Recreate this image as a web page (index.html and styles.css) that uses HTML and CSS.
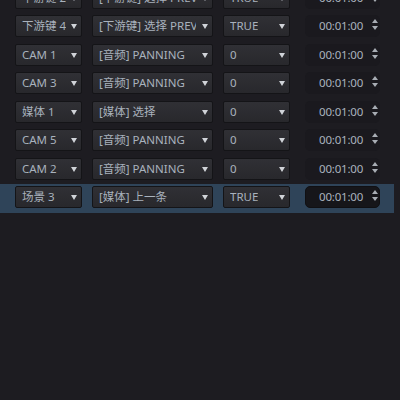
FILE: index.html
```html
<!DOCTYPE html>
<html>
<head>
<meta charset="utf-8">
<link rel="stylesheet" href="styles.css">
</head>
<body>
<div class="list">
  <div class="row">
    <div class="dd"><span class="txt">下游键 2</span><i class="caret"></i></div>
    <div class="dd"><span class="txt">[下游键] 选择 PREVIEW</span><i class="caret"></i></div>
    <div class="dd"><span class="txt">TRUE</span><i class="caret"></i></div>
    <div class="time"><span class="tval">00:01:00</span><span class="spin"><i class="up"></i><i class="down"></i></span></div>
  </div>
  <div class="row">
    <div class="dd"><span class="txt">下游键 4</span><i class="caret"></i></div>
    <div class="dd"><span class="txt">[下游键] 选择 PREVIEW</span><i class="caret"></i></div>
    <div class="dd"><span class="txt">TRUE</span><i class="caret"></i></div>
    <div class="time"><span class="tval">00:01:00</span><span class="spin"><i class="up"></i><i class="down"></i></span></div>
  </div>
  <div class="row">
    <div class="dd"><span class="txt">CAM 1</span><i class="caret"></i></div>
    <div class="dd"><span class="txt">[音频] PANNING</span><i class="caret"></i></div>
    <div class="dd"><span class="txt">0</span><i class="caret"></i></div>
    <div class="time"><span class="tval">00:01:00</span><span class="spin"><i class="up"></i><i class="down"></i></span></div>
  </div>
  <div class="row">
    <div class="dd"><span class="txt">CAM 3</span><i class="caret"></i></div>
    <div class="dd"><span class="txt">[音频] PANNING</span><i class="caret"></i></div>
    <div class="dd"><span class="txt">0</span><i class="caret"></i></div>
    <div class="time"><span class="tval">00:01:00</span><span class="spin"><i class="up"></i><i class="down"></i></span></div>
  </div>
  <div class="row">
    <div class="dd"><span class="txt">媒体 1</span><i class="caret"></i></div>
    <div class="dd"><span class="txt">[媒体] 选择</span><i class="caret"></i></div>
    <div class="dd"><span class="txt">0</span><i class="caret"></i></div>
    <div class="time"><span class="tval">00:01:00</span><span class="spin"><i class="up"></i><i class="down"></i></span></div>
  </div>
  <div class="row">
    <div class="dd"><span class="txt">CAM 5</span><i class="caret"></i></div>
    <div class="dd"><span class="txt">[音频] PANNING</span><i class="caret"></i></div>
    <div class="dd"><span class="txt">0</span><i class="caret"></i></div>
    <div class="time"><span class="tval">00:01:00</span><span class="spin"><i class="up"></i><i class="down"></i></span></div>
  </div>
  <div class="row">
    <div class="dd"><span class="txt">CAM 2</span><i class="caret"></i></div>
    <div class="dd"><span class="txt">[音频] PANNING</span><i class="caret"></i></div>
    <div class="dd"><span class="txt">0</span><i class="caret"></i></div>
    <div class="time"><span class="tval">00:01:00</span><span class="spin"><i class="up"></i><i class="down"></i></span></div>
  </div>
  <div class="row selected">
    <div class="dd"><span class="txt">场景 3</span><i class="caret"></i></div>
    <div class="dd"><span class="txt">[媒体] 上一条</span><i class="caret"></i></div>
    <div class="dd"><span class="txt">TRUE</span><i class="caret"></i></div>
    <div class="time"><span class="tval">00:01:00</span><span class="spin"><i class="up"></i><i class="down"></i></span></div>
  </div>
</div>
</body>
</html>
```
FILE: styles.css
```css
html, body {
  margin: 0;
  padding: 0;
  background: #1d1c21;
  height: 400px;
  overflow: hidden;
}
body {
  font-family: "Noto Sans", "Noto Sans CJK SC", sans-serif;
  font-size: 11.5px;
  color: #a9b2bd;
}
.list {
  margin-top: -15.5px;
  width: 394px;
}
.row {
  height: 28.5px;
  box-sizing: border-box;
  padding: 2px 0 0 15px;
  display: grid;
  grid-template-columns: 67px 121px 67px 80px;
  column-gap: 10px;
  align-items: start;
}
.row .time {
  margin-left: 5px;
}
.row.selected {
  background: #2f4459;
}
.dd {
  position: relative;
  height: 22px;
  box-sizing: border-box;
  border: 1px solid #141417;
  border-radius: 2px;
  background: linear-gradient(#303035, #28282c);
  display: flex;
  align-items: center;
  padding: 0 12px 0 6px;
  overflow: hidden;
}
.dd:nth-child(2) .txt {
  margin-right: 4px;
}
.txt {
  white-space: nowrap;
  overflow: hidden;
  line-height: 20px;
}
.caret {
  position: absolute;
  right: 4px;
  top: 8px;
  width: 0;
  height: 0;
  border-left: 3.5px solid transparent;
  border-right: 3.5px solid transparent;
  border-top: 5px solid #d0d3d8;
}
.time {
  position: relative;
  height: 22px;
  box-sizing: border-box;
  border-radius: 5px;
  background: #1a191e;
  display: flex;
  align-items: center;
  padding-left: 14px;
}
.selected .time {
  background: #16161a;
  border: 1px solid #101013;
  padding-left: 13px;
}
.tval {
  line-height: 20px;
  letter-spacing: -0.2px;
}
.spin {
  position: absolute;
  right: 2px;
  top: 4px;
  display: flex;
  flex-direction: column;
  gap: 3px;
}
.selected .spin {
  top: 3px;
  right: 1px;
}
.up, .down {
  width: 0;
  height: 0;
  border-left: 3px solid transparent;
  border-right: 3px solid transparent;
}
.up {
  border-bottom: 4px solid #a8adb4;
}
.down {
  border-top: 4px solid #a8adb4;
}
```
